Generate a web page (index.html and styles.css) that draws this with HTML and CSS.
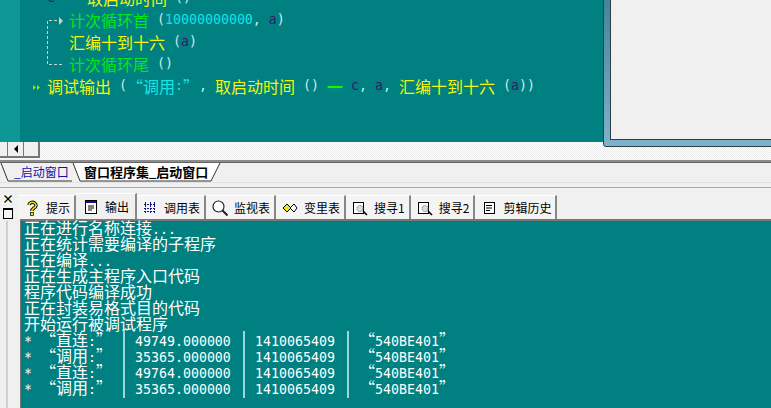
FILE: index.html
```html
<!DOCTYPE html>
<html lang="zh-CN">
<head>
<meta charset="utf-8">
<title>窗口程序集_启动窗口</title>
<link rel="stylesheet" href="styles.css">
</head>
<body>
<section class="editor">
  <div class="gutter"></div>
  <div class="code">
    <div class="line"><span class="var">c</span><span class="w">    </span><span class="y z">取启动时间</span><span class="w"> ()</span></div>
    <div class="line ind"><span class="g z">计次循环首</span><span class="w"> (</span><span class="c">10000000000</span><span class="w">, </span><span class="var">a</span><span class="w">)</span></div>
    <div class="line ind"><span class="y z">汇编十到十六</span><span class="w"> (</span><span class="var">a</span><span class="w">)</span></div>
    <div class="line ind"><span class="g z">计次循环尾</span><span class="w"> ()</span></div>
    <div class="line"><span class="y z">调试输出</span><span class="w"> (</span><span class="c z">“调用</span><span class="c">:</span><span class="c z">”</span><span class="w">, </span><span class="y z">取启动时间</span><span class="w"> () </span><span class="minus z">一</span><span class="w"> </span><span class="var">c</span><span class="w">, </span><span class="var">a</span><span class="w">, </span><span class="y z">汇编十到十六</span><span class="w"> (</span><span class="var">a</span><span class="w">))</span></div>
  </div>
  <svg class="flow" width="32" height="100" viewBox="0 0 32 100">
    <path d="M24 20.500H14.500V64.500H29" fill="none" stroke="#c8d0d0" stroke-dasharray="3 2"/>
    <path d="M26 17v8l4-4z" fill="#c8d0d0"/>
    <path d="M0 85v5l3-2.500zM4 85v5l3-2.500z" fill="#9be01c"/>
  </svg>
  <div class="float-win"><div class="float-inner"></div></div>
</section>
<div class="hscroll">
  <span class="sb-btn"></span><span class="sb-btn arrow"><svg width="6" height="8" viewBox="0 0 6 8"><path d="M5 0v8L1 4z" fill="#000"/></svg></span><span class="sb-btn wide"></span>
</div>
<div class="rule"></div>
<div class="doc-tabs">
  <svg class="doc-shape" width="240" height="19" viewBox="0 0 240 19">
    <path d="M1 0l7 18h64" fill="none" stroke="#333"/>
    <path d="M73 0l7 18h131l9-18z" fill="#fff"/>
    <path d="M73 0l7 18h131l9-18" fill="none" stroke="#333"/>
  </svg>
  <span class="doc-tab">_启动窗口</span>
  <span class="doc-tab on">窗口程序集_启动窗口</span>
</div>
<div class="strip"></div>
<section class="pane">
  <div class="pane-side">
    <span class="pane-btn">×</span>
    <span class="pane-btn sq"></span>
    <span class="pane-line"></span>
  </div>
  <div class="pane-main">
    <nav class="tabs">
      <span class="tab"><svg class="ico" viewBox="0 0 16 16"><path d="M5 5a3.500 3 0 1 1 5 3L8 10v1" fill="none" stroke="#000" stroke-width="3.400"/><path d="M5 5a3.500 3 0 1 1 5 3L8 10v1" fill="none" stroke="#f2e20a" stroke-width="1.600"/><rect x="6.500" y="12.500" width="3" height="3" fill="#f2e20a" stroke="#000" stroke-width=".7"/></svg>提示</span>
      <span class="tab on"><svg class="ico" viewBox="0 0 16 16"><rect x="2.500" y="1.500" width="11" height="13" fill="#fff" stroke="#000"/><rect x="3" y="2" width="10" height="2" fill="#12128c"/><path d="M5 7h6M5 9h6M5 11h4" stroke="#000"/></svg>输出</span>
      <span class="tab narrow"><svg class="ico" viewBox="0 0 16 16"><path d="M2 4.500h12M2 8.500h12M2 11.500h12" stroke="#12128c" stroke-dasharray="2 1"/><path d="M3.500 2v12M8.500 2v12M12.500 2v12" stroke="#12128c" stroke-dasharray="2 1"/></svg>调用表</span>
      <span class="tab"><svg class="ico" viewBox="0 0 16 16"><circle cx="6.500" cy="6.500" r="5.500" fill="#fff" stroke="#222" stroke-width="1.200"/><path d="M10.500 10.500l5 5" stroke="#222" stroke-width="2"/></svg>监视表</span>
      <span class="tab"><svg class="ico" viewBox="0 0 16 16"><path d="M1 8l4-4 4 4-4 4z" fill="#f2e20a" stroke="#000"/><path d="M8 8l4-4 3 4-3 4z" fill="#fff" stroke="#000"/></svg>变里表</span>
      <span class="tab"><svg class="ico" viewBox="0 0 16 16"><rect x="1.500" y="2.500" width="10" height="11" fill="#fff" stroke="#000"/><circle cx="8" cy="8.500" r="3" fill="#ddd" stroke="#555" stroke-dasharray="1 1"/><path d="M11 11l4 4" stroke="#000" stroke-width="1.600"/></svg>搜寻1</span>
      <span class="tab"><svg class="ico" viewBox="0 0 16 16"><rect x="1.500" y="2.500" width="10" height="11" fill="#fff" stroke="#000"/><circle cx="8" cy="8.500" r="3" fill="#ddd" stroke="#555" stroke-dasharray="1 1"/><path d="M11 11l4 4" stroke="#000" stroke-width="1.600"/></svg>搜寻2</span>
      <span class="tab"><svg class="ico" viewBox="0 0 16 16"><rect x="3.500" y="2.500" width="10" height="11" fill="#fff" stroke="#000"/><path d="M5 5.500h6M5 8h6M5 10.500h4" stroke="#000"/></svg>剪辑历史</span>
    </nav>
    <div class="output">
      <div>正在进行名称连接<span class="m">...</span></div>
      <div>正在统计需要编译的子程序</div>
      <div>正在编译<span class="m">...</span></div>
      <div>正在生成主程序入口代码</div>
      <div>程序代码编译成功</div>
      <div>正在封装易格式目的代码</div>
      <div>开始运行被调试程序</div>
      <div class="row"><span><span class="m">* </span>“直连<span class="m">:</span>”</span><span><span class="m">49749.000000</span></span><span><span class="m">1410065409</span></span><span>“<span class="m">540BE401</span>”</span></div>
      <div class="row"><span><span class="m">* </span>“调用<span class="m">:</span>”</span><span><span class="m">35365.000000</span></span><span><span class="m">1410065409</span></span><span>“<span class="m">540BE401</span>”</span></div>
      <div class="row"><span><span class="m">* </span>“直连<span class="m">:</span>”</span><span><span class="m">49764.000000</span></span><span><span class="m">1410065409</span></span><span>“<span class="m">540BE401</span>”</span></div>
      <div class="row"><span><span class="m">* </span>“调用<span class="m">:</span>”</span><span><span class="m">35365.000000</span></span><span><span class="m">1410065409</span></span><span>“<span class="m">540BE401</span>”</span></div>
    </div>
  </div>
</section>
</body>
</html>
```
FILE: styles.css
```css
* { box-sizing: border-box; }
html, body { margin: 0; height: 100%; overflow: hidden; }
body {
  width: 771px; height: 408px; background: #f0f0f0;
  font-family: "Noto Sans CJK SC", "Liberation Sans", sans-serif;
}
.editor { position: relative; height: 142px; background: #008080; display: flex; }
.gutter { width: 20px; background: #0f9797; flex: none; }
.code { padding-left: 27px; margin-top: -13px; font-family: "DejaVu Sans Mono", monospace; font-size: 13.282px; }
.line { height: 22px; line-height: 22px; display: flex; white-space: pre; align-items: center; }
.z { font-family: "Noto Sans CJK SC", sans-serif; font-size: 16px; }
.ind { padding-left: 22px; }
.g { color: #00e818; }
.y { color: #f4f40c; }
.w { color: #d0e8e8; }
.c { color: #16e4e8; }
.var { color: #4a1266; }
.minus { color: #00ff00; font-weight: 700; }
.flow { position: absolute; left: 33px; top: 0; }
.float-win {
  position: absolute; left: 603px; top: -20px; width: 200px; height: 167px;
  border: 1px solid #2d3e48; border-radius: 3px; padding: 6px;
  background: linear-gradient(#3e7e92, #7fb2cc);
}
.float-inner { height: 100%; background: #f0f0f0; border: 1px solid #2d3e48; }
.hscroll {
  height: 18px; display: flex;
  background: repeating-conic-gradient(#fff 0 25%, #ececec 0 50%) 0 0 / 2px 2px;
}
.sb-btn {
  width: 8px; height: 16px; background: #f0f0f0;
  border-right: 1px solid #777; border-bottom: 2px solid #777;
}
.sb-btn.arrow { width: 16px; display: flex; align-items: center; justify-content: center; }
.sb-btn.wide { width: 16px; border-right-width: 2px; }
.rule { height: 3px; background: #8c8c8c; border-bottom: 1px solid #666; }
.doc-tabs { position: relative; height: 19px; display: flex; font-size: 12px; line-height: 18px; background: #f0f0f0; }
.doc-shape { position: absolute; left: 0; top: 0; }
.doc-tab { position: relative; color: #1111aa; width: 84px; padding-left: 14px; }
.doc-tab.on { color: #000; font-weight: 700; font-size: 13px; width: auto; padding-left: 0; white-space: nowrap; }
.strip { height: 6px; border-top: 1px solid #e2e2e2; border-bottom: 1px solid #a8a8a8; }
.pane { display: flex; height: 221px; }
.pane-side { position: relative; width: 20px; flex: none; }
.pane-btn { position: absolute; left: 2px; top: 6px; width: 10px; height: 10px; font-size: 12px; font-weight: 700; line-height: 9px; text-align: center; background: #f4f4f4; }
.pane-btn.sq { top: 19px; }
.pane-btn.sq::after { content: ""; display: block; width: 8px; height: 8px; border: 1px solid #000; border-top-width: 2px; margin: 1px; }
.pane-line { position: absolute; left: 6px; top: 33px; bottom: 0; width: 2px; background: #d0d0d0; }
.pane-main { flex: 1; min-width: 0; display: flex; flex-direction: column; }
.tabs { height: 31px; flex: none; display: flex; align-items: flex-end; font-size: 12px; color: #000; margin-left: -2px; }
.tab {
  height: 24px; padding: 0 4px 0 6px; display: flex; align-items: center; gap: 6px;
  line-height: 20px; background: #f4f4f4; border-top: 1px solid #fff; border-right: 2px solid #888;
  white-space: nowrap; position: relative;
}
.tab.on { height: 26px; padding: 0 6px 0 7px; background: #f0f0f0; }
.tab.narrow { padding-left: 5px; }
.ico { width: 16px; height: 16px; flex: none; }
.output {
  flex: 1; background: #008080; color: #fff; padding: 0 0 0 3px;
  font-size: 16px; line-height: 16px; border-top: 2px solid #777; border-left: 1px solid #777;
}
.output > div { height: 16px; white-space: pre; }
.output > div:first-child { margin-top: -2px; }
.m { font-family: "DejaVu Sans Mono", monospace; font-size: 13.282px; }
.row { display: grid; grid-template-columns: 99px 120px 104px 1fr; }
.row > span { white-space: pre; }
.row > span + span { padding-left: 10px; border-left: 2px solid #9ad6e0; }
```
